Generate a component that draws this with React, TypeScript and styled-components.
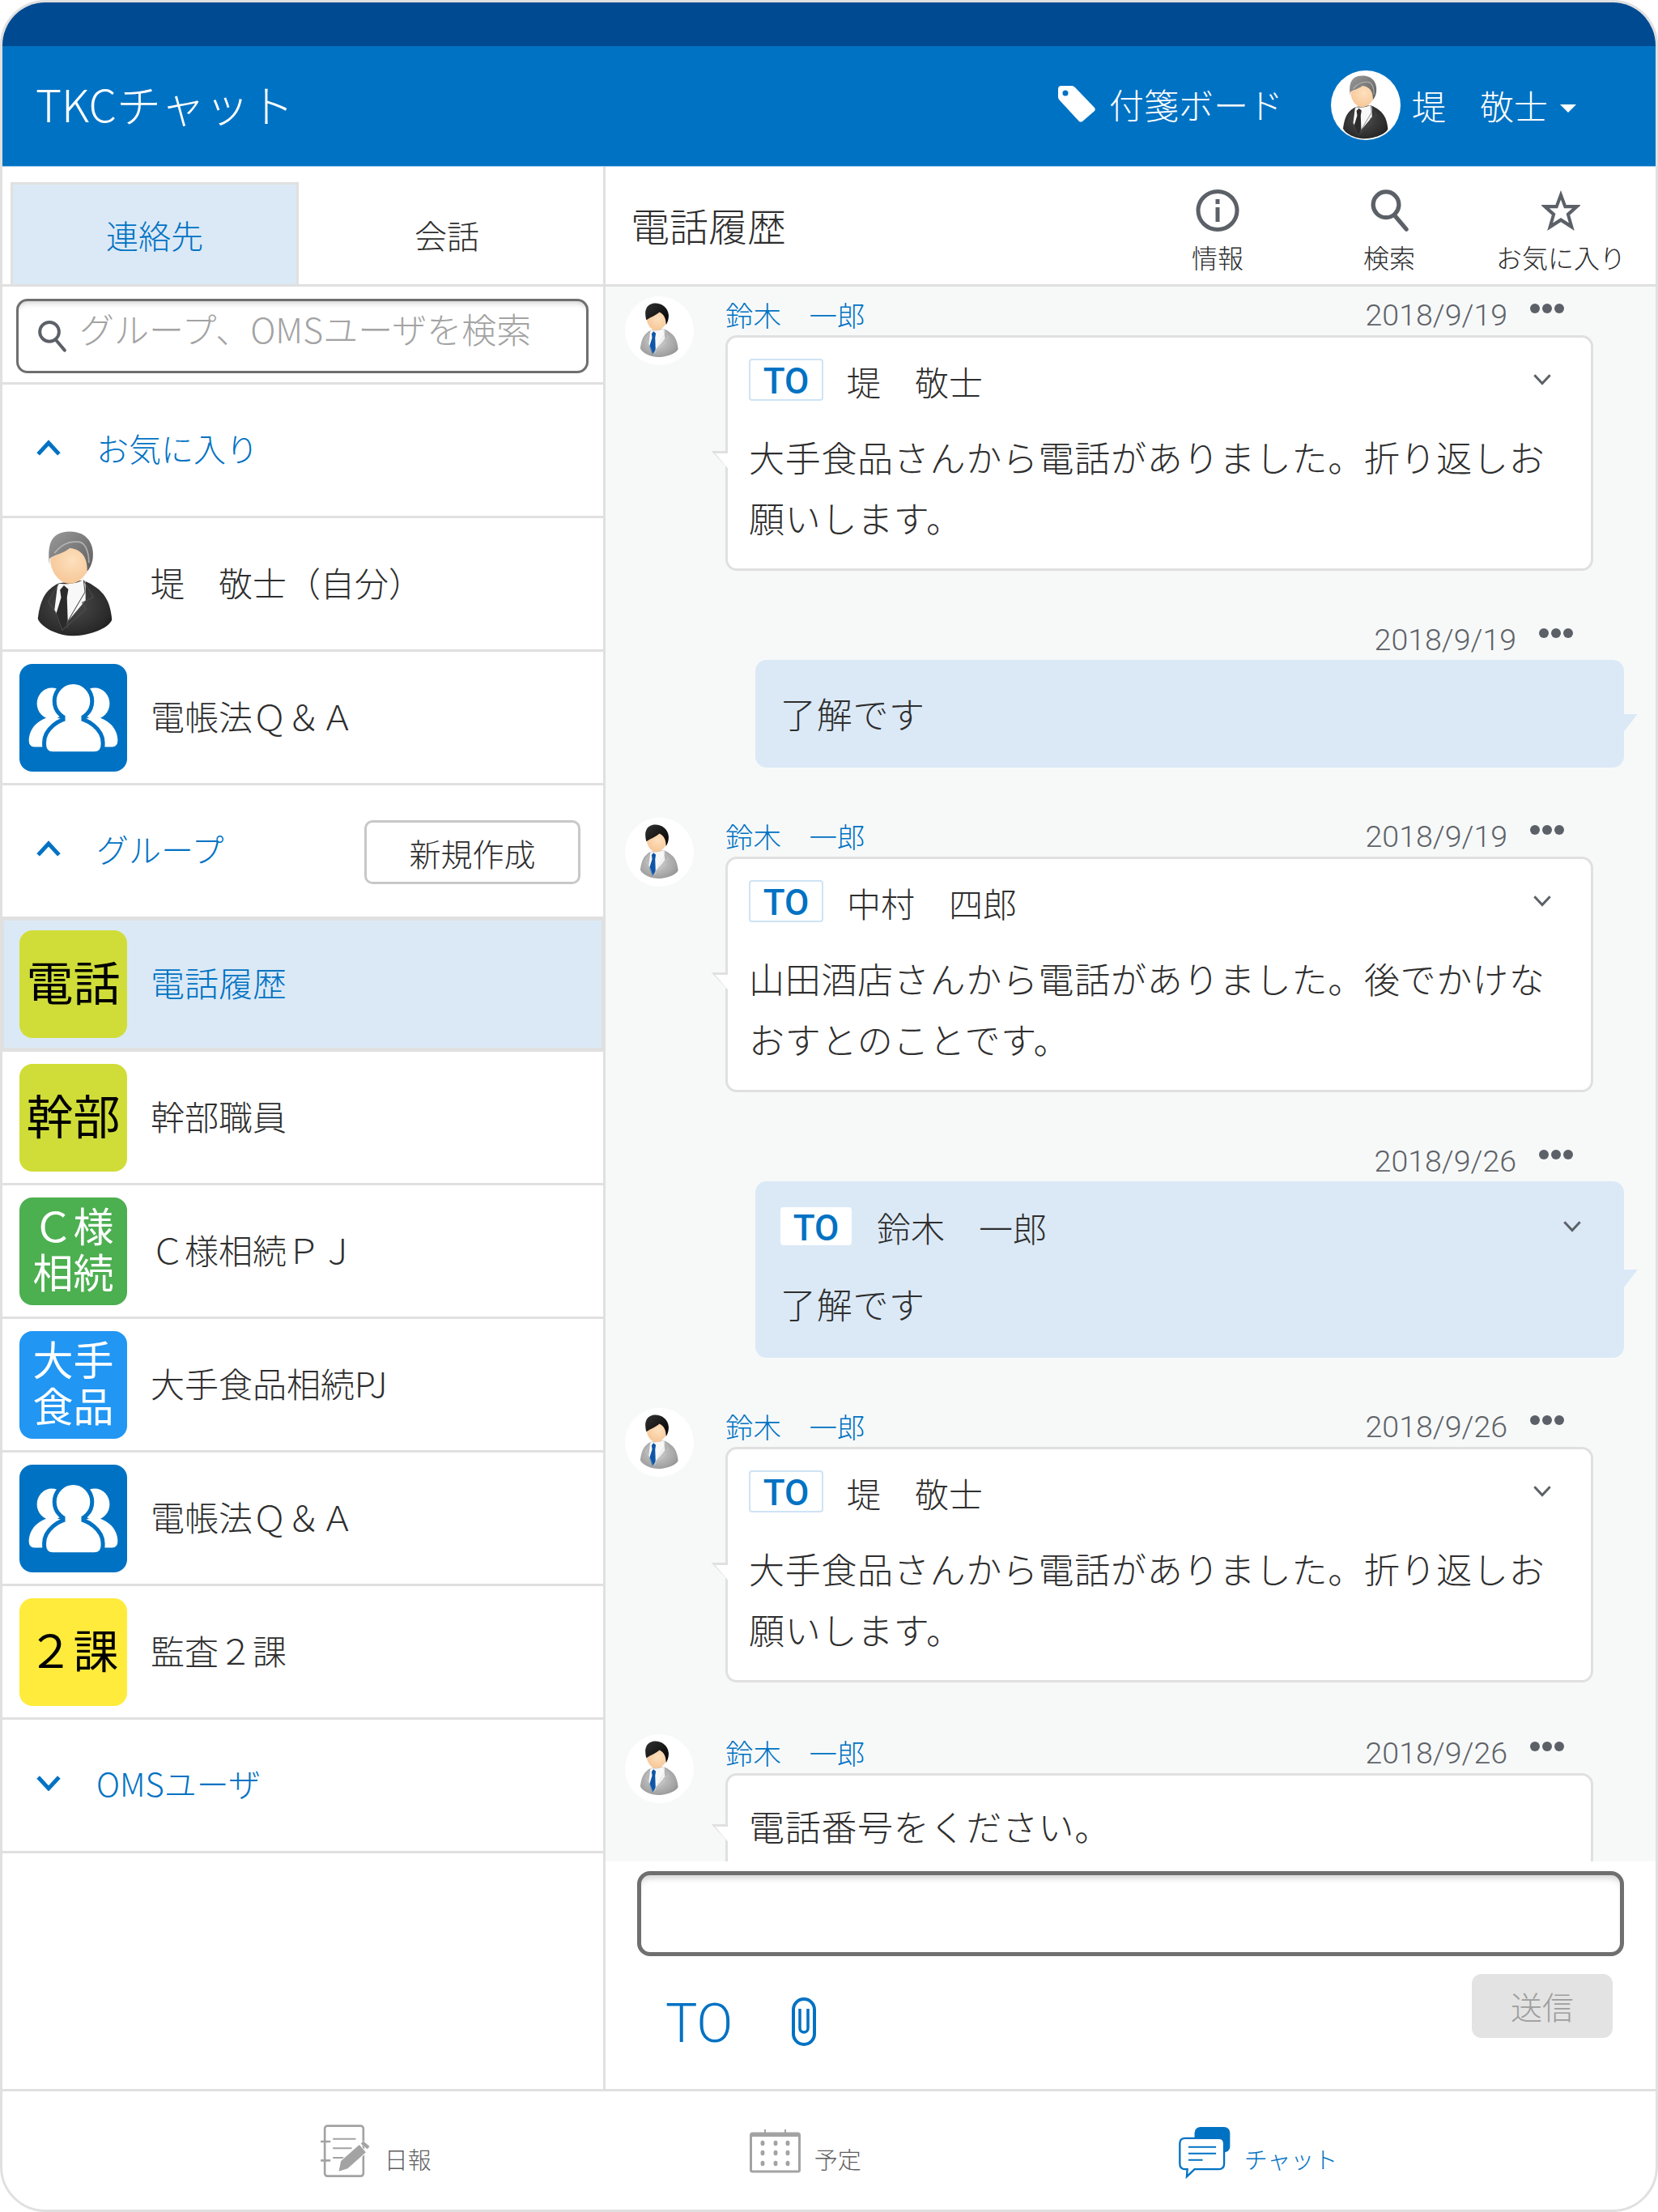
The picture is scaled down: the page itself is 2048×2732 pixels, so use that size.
import React from "react";
import styled, { createGlobalStyle } from "styled-components";

const BLUE = "#0072c3";
const LINE = "#e0e0e0";
const PALE = "#dbe9f6";
const INK = "#2e2e2e";
const ICON = "#5c6168";

const Global = createGlobalStyle`
  html, body { margin: 0; padding: 0; background: #fff; }
  body { font-family: "Noto Sans CJK JP", "Noto Sans", sans-serif; color: ${INK}; font-weight: 300; }
  * { box-sizing: border-box; }
`;

const Frame = styled.div`
  width: 2048px; height: 2732px; border: 3px solid ${LINE}; border-radius: 56px;
  overflow: hidden; display: flex; flex-direction: column; background: #fff;
`;
const StatusBar = styled.div`height: 54px; background: #004a91; flex: none;`;
const Header = styled.header`
  height: 149px; flex: none; background: ${BLUE}; color: #fff; display: flex; align-items: center;
  padding: 0 0 4px 41px; border-bottom: 1px solid #9cc7e8;
`;
const Brand = styled.div`font-size: 55px; margin-right: auto; margin-bottom: 4px;`;
const BoardLink = styled.div`display: flex; align-items: center; gap: 17px; font-size: 43px; margin-right: 59px; margin-bottom: 2px;`;
const UserMenu = styled.div`display: flex; align-items: center; font-size: 42px; margin-right: 98px;`;
const HeaderAvatar = styled.div`
  width: 86px; height: 86px; border-radius: 50%; background: #fff; overflow: hidden;
  display: flex; justify-content: center; align-items: flex-end; margin-right: 14px; margin-top: 2px;
`;
const Caret = styled.span`
  width: 0; height: 0; border-left: 10px solid transparent; border-right: 10px solid transparent;
  border-top: 10px solid #fff; margin-left: 15px; margin-top: 10px;
`;

const Body = styled.div`flex: 1; display: flex; min-height: 0;`;
const Sidebar = styled.aside`width: 745px; flex: none; border-right: 3px solid ${LINE}; display: flex; flex-direction: column;`;
const Tabs = styled.div`height: 148px; flex: none; display: flex; align-items: flex-end; padding-left: 10px; border-bottom: 3px solid ${LINE};`;
const Tab = styled.div<{ $active?: boolean }>`
  height: 126px; width: ${(p) => (p.$active ? "356px" : "auto")}; flex: ${(p) => (p.$active ? "none" : "1")};
  display: flex; align-items: center; justify-content: center; font-size: 40px;
  padding-right: ${(p) => (p.$active ? 0 : 10)}px;
  color: ${(p) => (p.$active ? BLUE : INK)}; background: ${(p) => (p.$active ? PALE : "transparent")};
  border: 3px solid ${(p) => (p.$active ? LINE : "transparent")}; border-bottom: 0;
`;
const SearchWrap = styled.div`height: 121px; flex: none; padding: 15px 18px 0 17px; border-bottom: 3px solid ${LINE};`;
const SearchBox = styled.div`
  height: 92px; border: 3px solid #6f6f6f; border-radius: 14px; display: flex; align-items: center;
  padding-left: 23px; gap: 16px; font-size: 43px; color: #a3a3a3; box-shadow: inset 0 7px 7px -5px #cfcfcf;
`;
const Placeholder = styled.span`margin-bottom: 20px;`;
const Row = styled.div<{ $selected?: boolean }>`
  height: 165px; flex: none; display: flex; align-items: center; gap: 29px; padding-left: 21px; font-size: 42px;
  border-bottom: 3px solid ${LINE};
  ${(p) => p.$selected && `background: ${PALE}; color: ${BLUE}; border: 2px solid ${LINE}; border-top-width: 3px; border-bottom-width: 5px; padding-left: 19px; margin-top: -1px;`}
`;
const RowLabel = styled.span`margin-bottom: 6px;`;
const SectionRow = styled.div`
  height: 165px; flex: none; display: flex; align-items: center; padding: 0 28px 6px 41px; border-bottom: 3px solid ${LINE};
  color: ${BLUE}; font-size: 40px; gap: 43px;
`;
const NewButton = styled.button`
  margin-left: auto; width: 267px; height: 79px; background: #fff; border: 3px solid #c8c8c8; border-radius: 10px;
  font: inherit; font-size: 39px; color: ${INK}; padding: 2px 0 0; margin-top: 8px;
`;
const Tile = styled.div<{ $bg: string; $fg?: string; $size?: number }>`
  width: 133px; height: 133px; border-radius: 16px; flex: none; background: ${(p) => p.$bg}; color: ${(p) => p.$fg ?? "#fff"};
  display: flex; align-items: center; justify-content: center; text-align: center;
  font-size: ${(p) => p.$size ?? 58}px; line-height: 1.15; font-weight: 400;
  padding-bottom: ${(p) => (p.$fg ? 8 : 0)}px;
`;
const SelfPhoto = styled.div`width: 133px; height: 133px; flex: none; display: flex; justify-content: center; align-items: center; padding-left: 4px;`;

const Main = styled.main`flex: 1; min-width: 0; display: flex; flex-direction: column;`;
const TopBar = styled.div`height: 148px; flex: none; display: flex; align-items: center; padding: 0 11px 3px 31px; border-bottom: 3px solid ${LINE};`;
const Title = styled.h1`margin: 0 auto 0 0; font-size: 48px; font-weight: 300; color: ${INK};`;
const Tool = styled.div`
  width: 212px; display: flex; flex-direction: column; align-items: center; gap: 9px; font-size: 32px; line-height: 44px;
  margin-top: 18px; color: ${INK}; white-space: nowrap;
`;
const ToolIcon = styled.span`height: 52px; display: flex; align-items: center; justify-content: center;`;
const Chat = styled.div`flex: 1; min-height: 0; overflow: hidden; background: #f7f9f9; padding: 12px 39px 0 24px; display: flex; flex-direction: column; gap: 62px;`;
const Incoming = styled.div`display: grid; grid-template-columns: 124px 1072px; flex: none; &:last-child { margin-top: 2px; }`;
const Outgoing = styled.div`padding-left: 161px; flex: none;`;
const ChatAvatar = styled.div`
  width: 85px; height: 85px; border-radius: 50%; background: #fff; display: flex; justify-content: center; align-items: center;
`;
const Meta = styled.div<{ $self?: boolean }>`
  height: 48px; display: flex; align-items: center; padding-right: ${(p) => (p.$self ? 63 : 36)}px; padding-top: 4px;
`;
const Sender = styled.span`font-size: 34.5px; color: ${BLUE}; margin-right: auto; margin-bottom: 8px;`;
const Stamp = styled.span`font-size: 37.5px; color: #5f6368; margin-left: auto; margin-right: 28px; font-family: Roboto, "Noto Sans", sans-serif; font-weight: 300; margin-bottom: 6px;`;
const Dots = styled.span`display: flex; gap: 3px; margin-bottom: 22px; & > i { width: 12px; height: 12px; border-radius: 50%; background: ${ICON}; display: block; }`;
const Bubble = styled.div<{ $self?: boolean }>`
  position: relative; border-radius: 14px; font-size: 44px; line-height: 75px; color: ${INK};
  background: ${(p) => (p.$self ? PALE : "#fff")}; border: ${(p) => (p.$self ? "none" : `3px solid ${LINE}`)};
  padding: ${(p) => (p.$self ? "29px 32px 29px 31px" : "25px 23px 25px 26px")};
  letter-spacing: 0.7px;
`;
const TailLeft = styled.span`
  position: absolute; left: -21px; top: 50%; width: 21px; height: 22px; margin-top: -3px; background: ${LINE};
  clip-path: polygon(0 0, 100% 0, 100% 100%);
  &::after { content: ""; position: absolute; inset: 3px 0 0 5px; background: #fff; clip-path: polygon(0 0, 100% 0, 100% 100%); }
`;
const TailRight = styled.span`
  position: absolute; right: -17px; top: 50%; width: 17px; height: 22px; background: ${PALE};
  clip-path: polygon(0 0, 100% 0, 0 100%);
`;
const ToRow = styled.div<{ $self?: boolean }>`
  display: flex; align-items: center; height: ${(p) => (p.$self ? 47 : 52)}px;
  margin-top: ${(p) => (p.$self ? 3 : 1)}px; margin-bottom: ${(p) => (p.$self ? 35 : 32)}px;
  gap: ${(p) => (p.$self ? 31 : 29)}px; padding-right: ${(p) => (p.$self ? 20 : 25)}px; line-height: 1;
`;
const ToBadge = styled.span<{ $self?: boolean }>`
  width: ${(p) => (p.$self ? 88 : 92)}px; height: 100%; display: flex; align-items: center; justify-content: center;
  border: ${(p) => (p.$self ? "none" : "2px solid #cfe3f5")}; border-radius: 4px; background: #fff; color: ${BLUE};
  font-family: Roboto, sans-serif; font-weight: 500; font-size: 44px; letter-spacing: 0; padding-top: 4px;
`;
const ToName = styled.span`margin-right: auto; font-size: 42px; letter-spacing: 0; margin-top: 3px;`;

const Composer = styled.div`height: 281px; flex: none; padding: 12px 39px 0; display: flex; flex-direction: column; background: #fff;`;
const Input = styled.div`height: 105px; border: 5px solid #6f6f6f; border-radius: 16px; box-shadow: inset 0 8px 8px -5px #cfcfcf;`;
const ComposerBar = styled.div`display: flex; align-items: flex-start; margin-top: 22px; padding: 0 14px 0 35px;`;
const ToLink = styled.span`font-family: Roboto, sans-serif; font-weight: 300; font-size: 66px; line-height: 63px; color: ${BLUE}; margin-top: 30px;`;
const Clip = styled.span`margin-left: 73px; margin-top: 29px; display: block; line-height: 0;`;
const SendButton = styled.button`
  margin-left: auto; width: 174px; height: 79px; background: #e3e3e3; border: none; border-radius: 12px; font: inherit; font-size: 39px; color: #9e9e9e; padding: 0 0 2px;
`;

const BottomNav = styled.nav`height: 149px; flex: none; border-top: 3px solid ${LINE}; display: flex; justify-content: center; align-items: center; gap: 390px; padding-top: 2px;`;
const NavItem = styled.div<{ $active?: boolean }>`
  display: flex; align-items: center; gap: ${(p) => (p.$active ? 15 : 17)}px; font-size: 29px; color: ${(p) => (p.$active ? BLUE : "#5f5f5f")};
  &:nth-child(2) { margin-left: 3px; }
`;
const NavLabel = styled.span`margin-top: 18px;`;

const Man: React.FC<{ width: number; id: string; hair: [string, string, string]; suit: [string, string, string]; tie: string; black?: boolean }> = ({ width, id, hair, suit, tie, black }) => (
  <svg width={width} height={(width * 390) / 280} viewBox="85 45 280 390" style={{ display: "block", flex: "none" }}>
    <defs>
      <linearGradient id={`${id}h`} x1="0" y1="0" x2="1" y2="1">
        <stop offset="0" stopColor={hair[0]} />
        <stop offset="1" stopColor={hair[1]} />
      </linearGradient>
      <radialGradient id={`${id}s`} cx="0.45" cy="0.45" r="0.75">
        <stop offset="0" stopColor={suit[0]} />
        <stop offset="0.7" stopColor={suit[1]} />
        <stop offset="1" stopColor={suit[2]} />
      </radialGradient>
      <radialGradient id={`${id}f`} cx="0.55" cy="0.4" r="0.65">
        <stop offset="0" stopColor="#fde0bd" />
        <stop offset="1" stopColor="#f6c595" />
      </radialGradient>
    </defs>
    <path d="M165 238C120 262 100 290 90 365C95 390 150 425 210 428C280 428 345 400 357 370C350 300 330 262 255 228Z" fill={`url(#${id}s)`} />
    <path d="M162 238L150 335L178 400L262 300L262 222C235 240 190 245 162 238Z" fill="#f8f8f8" />
    <path d="M184 246L200 260L195 290L198 375L176 412L155 352L174 290L170 262Z" fill={tie} />
    <path d="M165 240L128 305L155 345L178 408L264 332L250 308L290 290L255 228L260 270L200 372L196 400" fill="none" stroke={suit[0]} strokeWidth="3" />
    <path d="M135 150C135 200 170 240 205 240C245 240 275 195 280 165C275 125 240 100 215 100C190 125 155 135 135 150Z" fill={`url(#${id}f)`} />
    {black ? (
      <path d="M132 165C118 110 125 60 185 48C230 42 285 70 290 130C292 160 282 185 272 200C272 160 262 128 225 110C200 135 160 145 135 165Z" fill={`url(#${id}h)`} />
    ) : (
      <>
        <path d="M132 172C125 110 130 52 205 52C270 52 295 100 288 150C285 170 275 190 268 195C270 150 250 115 205 112C185 130 150 135 132 150Z" fill={`url(#${id}h)`} />
        <path d="M150 130C170 105 195 85 240 90C262 95 274 125 274 165" fill="none" stroke={hair[2]} strokeWidth="5" opacity="0.7" />
      </>
    )}
  </svg>
);

const Boss: React.FC<{ width: number; id: string }> = ({ width, id }) => (
  <Man width={width} id={id} hair={["#9a9a9a", "#5e5e5e", "#c9c9c9"]} suit={["#4c4c4c", "#2a2a2a", "#111"]} tie="#2b2b2b" />
);
const Suzuki: React.FC<{ id: string }> = ({ id }) => (
  <Man width={49} id={id} hair={["#333", "#000", "#000"]} suit={["#cfcfcf", "#a0a0a0", "#777"]} tie="#0d56a8" black />
);

const GroupIcon = () => (
  <svg width="100%" height="100%" viewBox="0 0 400 400" style={{ display: "block" }}>
    <g fill="#fff">
      <ellipse cx="120" cy="147" rx="55" ry="58" />
      <ellipse cx="280" cy="147" rx="55" ry="58" />
      <path d="M35 285C35 240 70 205 120 195L160 205L160 308H55Q35 308 35 285Z" />
      <path d="M365 285C365 240 330 205 280 195L240 205L240 308H345Q365 308 365 285Z" />
    </g>
    <g fill="#fff" stroke={BLUE} strokeWidth="15">
      <circle cx="200" cy="138" r="70" />
      <path d="M92 292C92 245 145 200 200 200C255 200 310 245 310 292V300Q310 333 278 333H124Q92 333 92 300Z" />
    </g>
    <rect x="170" y="190" width="60" height="24" fill="#fff" />
  </svg>
);

const Chevron: React.FC<{ dir: "up" | "down"; w: number; color: string; sw: number }> = ({ dir, w, color, sw }) => (
  <svg width={w} height={w * 0.65} viewBox="0 0 32 21" style={{ display: "block", flex: "none" }}>
    <path d={dir === "up" ? "M3 18L16 4L29 18" : "M3 3L16 17L29 3"} fill="none" stroke={color} strokeWidth={sw} />
  </svg>
);

const SearchGlyph: React.FC<{ size: number; sw: number }> = ({ size, sw }) => (
  <svg width={size} height={size * 1.1} viewBox="0 0 36 40" style={{ display: "block", flex: "none" }}>
    <circle cx="15" cy="15" r="12" fill="none" stroke={ICON} strokeWidth={sw} />
    <path d="M23 25L34 38" stroke={ICON} strokeWidth={sw} strokeLinecap="round" />
  </svg>
);

const TagIcon = () => (
  <svg width="46" height="45" viewBox="0 0 46 45">
    <path fillRule="evenodd" fill="#fff" d="M4 0H17Q19 0 21 2L45 27Q46.500 29 45 31L30 44Q28 45 26 44L2 18Q0 16 0 14V4Q0 0 4 0ZM9 5.500A3.500 3.500 0 1 0 9 12.500A3.500 3.500 0 1 0 9 5.500Z" />
  </svg>
);
const InfoIcon = () => (
  <svg width="54" height="52" viewBox="0 0 54 52">
    <ellipse cx="27" cy="26" rx="24" ry="23.500" fill="none" stroke={ICON} strokeWidth="5" />
    <rect x="24.500" y="12" width="5" height="6" fill={ICON} />
    <rect x="24.500" y="22" width="5" height="18" fill={ICON} />
  </svg>
);
const StarIcon = () => (
  <svg width="48" height="50" viewBox="0 0 54 52" preserveAspectRatio="none">
    <path d="M27 6L33 21L49 21L37 31L42 47L27 38L12 47L17 31L5 21L21 21Z" fill="none" stroke={ICON} strokeWidth="4.500" strokeLinejoin="miter" />
  </svg>
);
const ClipIcon = () => (
  <svg width="30" height="60" viewBox="0 0 30 60">
    <rect x="2" y="2" width="26" height="56" rx="13" fill="none" stroke={BLUE} strokeWidth="4" />
    <path d="M10 14V38A5 5 0 0 0 20 38V14" fill="none" stroke={BLUE} strokeWidth="3.500" />
  </svg>
);
const ReportIcon = () => (
  <svg width="62" height="66" viewBox="45 25 185 198">
    <g stroke="#a3a3a3" fill="none">
      <rect x="60" y="30" width="143" height="186" rx="10" strokeWidth="8" />
      <path d="M48 88H78M48 158H78" strokeWidth="8" strokeLinecap="round" />
      <path d="M90 78H175M90 113H160M90 148H130" strokeWidth="6" />
    </g>
    <path d="M112 198L120 160L188 100L212 128L145 188Z" fill="#a3a3a3" stroke="#fff" strokeWidth="6" paintOrder="stroke" />
    <path d="M202 86L226 106L218 116L194 96Z" fill="#a3a3a3" stroke="#fff" strokeWidth="3" paintOrder="stroke" />
  </svg>
);
const CalendarIcon = () => (
  <svg width="63" height="54" viewBox="0 0 63 54">
    <rect x="1.500" y="5" width="60" height="47" rx="2" fill="none" stroke="#a3a3a3" strokeWidth="3" />
    <rect x="1" y="5" width="61" height="4" fill="#a3a3a3" />
    <path d="M19 0V9M44 0V9" stroke="#a3a3a3" strokeWidth="2" />
    {[17, 29, 42].map((y) =>
      [16, 32, 47].map((x) => <ellipse key={`${x}-${y}`} cx={x} cy={y} rx="2.500" ry="3.200" fill="#a3a3a3" />)
    )}
  </svg>
);
const ChatIcon = () => (
  <svg width="68" height="67" viewBox="40 20 205 200">
    <rect x="105" y="28" width="132" height="95" rx="22" fill={BLUE} />
    <path d="M70 70H195Q215 70 215 90V165Q215 185 195 185H105L76 213L78 185H70Q50 185 50 165V90Q50 70 70 70Z" fill="#fff" stroke={BLUE} strokeWidth="7" />
    <path d="M82 103H185M82 127H185M82 151H135" stroke={BLUE} strokeWidth="6" />
  </svg>
);

const MoreDots = () => (
  <Dots>
    <i />
    <i />
    <i />
  </Dots>
);

const ToLine: React.FC<{ name: string; self?: boolean }> = ({ name, self }) => (
  <ToRow $self={self}>
    <ToBadge $self={self}>TO</ToBadge>
    <ToName>{name}</ToName>
    <Chevron dir="down" w={24} color={ICON} sw={4} />
  </ToRow>
);

const Received: React.FC<{ id: string; date: string; to?: string; text: React.ReactNode }> = ({ id, date, to, text }) => (
  <Incoming>
    <ChatAvatar>
      <Suzuki id={id} />
    </ChatAvatar>
    <div>
      <Meta>
        <Sender>鈴木　一郎</Sender>
        <Stamp>{date}</Stamp>
        <MoreDots />
      </Meta>
      <Bubble>
        <TailLeft />
        {to && <ToLine name={to} />}
        {text}
      </Bubble>
    </div>
  </Incoming>
);

const Sent: React.FC<{ date: string; to?: string; text: string }> = ({ date, to, text }) => (
  <Outgoing>
    <Meta $self>
      <Stamp>{date}</Stamp>
      <MoreDots />
    </Meta>
    <Bubble $self>
      <TailRight />
      {to && <ToLine name={to} self />}
      {text}
    </Bubble>
  </Outgoing>
);

export default function App() {
  return (
    <>
      <Global />
      <Frame>
        <StatusBar />
        <Header>
          <Brand>TKCチャット</Brand>
          <BoardLink>
            <TagIcon />
            付箋ボード
          </BoardLink>
          <UserMenu>
            <HeaderAvatar>
              <Boss width={58} id="hdr" />
            </HeaderAvatar>
            堤　敬士
            <Caret />
          </UserMenu>
        </Header>
        <Body>
          <Sidebar>
            <Tabs>
              <Tab $active>連絡先</Tab>
              <Tab>会話</Tab>
            </Tabs>
            <SearchWrap>
              <SearchBox>
                <SearchGlyph size={36} sw={4} />
                <Placeholder>グループ、OMSユーザを検索</Placeholder>
              </SearchBox>
            </SearchWrap>
            <SectionRow>
              <Chevron dir="up" w={32} color={BLUE} sw={5} />
              お気に入り
            </SectionRow>
            <Row>
              <SelfPhoto>
                <Boss width={96} id="self" />
              </SelfPhoto>
              <RowLabel>堤　敬士（自分）</RowLabel>
            </Row>
            <Row>
              <Tile $bg={BLUE}>
                <GroupIcon />
              </Tile>
              <RowLabel>電帳法Ｑ＆Ａ</RowLabel>
            </Row>
            <SectionRow>
              <Chevron dir="up" w={32} color={BLUE} sw={5} />
              グループ
              <NewButton>新規作成</NewButton>
            </SectionRow>
            <Row $selected>
              <Tile $bg="#d0dd38" $fg="#000">電話</Tile>
              <RowLabel>電話履歴</RowLabel>
            </Row>
            <Row>
              <Tile $bg="#d0dd38" $fg="#000">幹部</Tile>
              <RowLabel>幹部職員</RowLabel>
            </Row>
            <Row>
              <Tile $bg="#4caf50" $fg="#fff" $size={50}>
                Ｃ様
                <br />
                相続
              </Tile>
              <RowLabel>Ｃ様相続ＰＪ</RowLabel>
            </Row>
            <Row>
              <Tile $bg="#2196f3" $fg="#fff" $size={50}>
                大手
                <br />
                食品
              </Tile>
              <RowLabel>大手食品相続PJ</RowLabel>
            </Row>
            <Row>
              <Tile $bg={BLUE}>
                <GroupIcon />
              </Tile>
              <RowLabel>電帳法Ｑ＆Ａ</RowLabel>
            </Row>
            <Row>
              <Tile $bg="#ffeb3b" $fg="#000" $size={56}>２課</Tile>
              <RowLabel>監査２課</RowLabel>
            </Row>
            <SectionRow>
              <Chevron dir="down" w={32} color={BLUE} sw={5} />
              OMSユーザ
            </SectionRow>
          </Sidebar>
          <Main>
            <TopBar>
              <Title>電話履歴</Title>
              <Tool>
                <ToolIcon>
                  <InfoIcon />
                </ToolIcon>
                情報
              </Tool>
              <Tool>
                <ToolIcon>
                  <SearchGlyph size={48} sw={4} />
                </ToolIcon>
                検索
              </Tool>
              <Tool>
                <ToolIcon>
                  <StarIcon />
                </ToolIcon>
                お気に入り
              </Tool>
            </TopBar>
            <Chat>
              <Received id="a1" date="2018/9/19" to="堤　敬士" text="大手食品さんから電話がありました。折り返しお願いします。" />
              <Sent date="2018/9/19" text="了解です" />
              <Received id="a2" date="2018/9/19" to="中村　四郎" text="山田酒店さんから電話がありました。後でかけなおすとのことです。" />
              <Sent date="2018/9/26" to="鈴木　一郎" text="了解です" />
              <Received id="a3" date="2018/9/26" to="堤　敬士" text="大手食品さんから電話がありました。折り返しお願いします。" />
              <Received id="a4" date="2018/9/26" text="電話番号をください。" />
            </Chat>
            <Composer>
              <Input />
              <ComposerBar>
                <ToLink>TO</ToLink>
                <Clip>
                  <ClipIcon />
                </Clip>
                <SendButton>送信</SendButton>
              </ComposerBar>
            </Composer>
          </Main>
        </Body>
        <BottomNav>
          <NavItem>
            <ReportIcon />
            <NavLabel>日報</NavLabel>
          </NavItem>
          <NavItem>
            <CalendarIcon />
            <NavLabel>予定</NavLabel>
          </NavItem>
          <NavItem $active>
            <ChatIcon />
            <NavLabel>チャット</NavLabel>
          </NavItem>
        </BottomNav>
      </Frame>
    </>
  );
}
